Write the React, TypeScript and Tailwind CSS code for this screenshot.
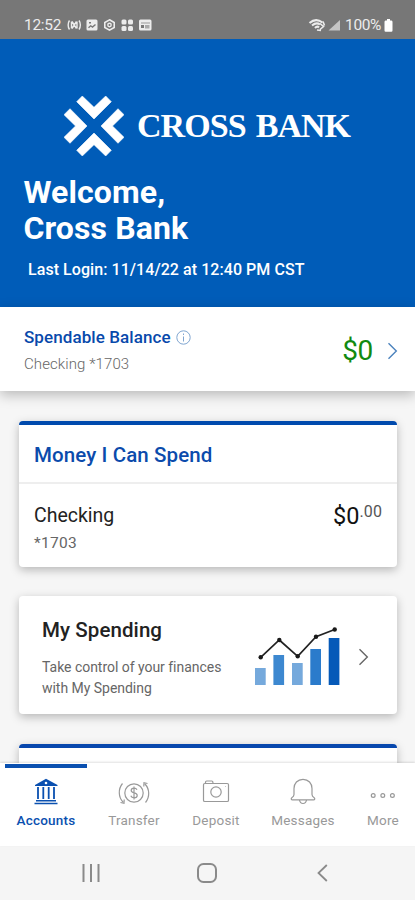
import type { ReactNode } from "react";
import clsx from "clsx";

const bars = [
  { x: 0, height: 17, fill: "#75a9dc" },
  { x: 18.4, height: 30, fill: "#3d88d0" },
  { x: 37, height: 22, fill: "#75a9dc" },
  { x: 55.3, height: 36, fill: "#2b7bcb" },
  { x: 73.7, height: 47, fill: "#0559b8" },
];

const points = [
  [5.7, 30.3],
  [24.3, 13],
  [42.7, 29.3],
  [61, 9.7],
  [79.7, 2.5],
];

function StatusBar() {
  return (
    <div className="flex h-[39px] shrink-0 items-start justify-between bg-[#777777] pl-6 pr-[22px] pt-[15px] text-[#ececec]">
      <div className="flex h-5 items-center">
        <span className="w-[43px] whitespace-nowrap text-[15.5px] leading-5 tracking-[-0.3px]">12:52</span>
        <svg className="-mt-px" width="87" height="14" viewBox="0 0 87 14" fill="none" stroke="currentColor">
          <path d="M2.5 2.5C.7 5 .7 9 2.5 11.5M12 2.5c1.8 2.5 1.8 6.5 0 9M5 3.5l4.5 7M9.5 3.5L5 10.5M4.5 3.5v7M10 3.5v7" strokeWidth="1.4" />
          <rect x="19.5" y="1.5" width="11" height="11" rx="1.5" fill="currentColor" stroke="none" />
          <path d="M21.5 9.8l2.2-2 1.8 1.3 3-2.6M22 4.7h2" stroke="#777" strokeWidth="1.4" />
          <path d="M42.5 1.8l4.7 2.7v5l-4.7 2.7-4.7-2.7v-5z" strokeWidth="1.6" />
          <circle cx="42.5" cy="7" r="1.7" strokeWidth="1.4" />
          <g fill="currentColor" stroke="none">
            <rect x="54.5" y="1.5" width="5" height="5" rx="1.5" />
            <rect x="61" y="1.5" width="5" height="5" rx="1.5" />
            <rect x="54.5" y="8" width="5" height="5" rx="1.5" />
            <rect x="61" y="8" width="5" height="5" rx="1.5" />
            <rect x="72" y="1.5" width="12.5" height="11" rx="1.5" />
          </g>
          <path d="M74 5h9" stroke="#999" />
          <rect x="78" y="7" width="4.5" height="3.5" fill="#aaa" stroke="none" />
          <rect x="74" y="7" width="3" height="3" fill="#777" stroke="none" />
        </svg>
      </div>
      <div className="flex h-5 items-center">
        <svg width="34" height="14" viewBox="0 0 34 14" fill="none" stroke="currentColor">
          <path d="M1.5 5c4-3.500 9-3.500 13-.5M4 7.500c3-2.500 6-2.500 8-1M7 10c1.500-1.500 3-1.500 4-.5" strokeWidth="2.1" />
          <path d="M12 5.500l3.500 3-3.500 3M15 3.500l1.500 4M9 12l4 .5" strokeWidth="1.6" />
          <path d="M32 2v10.500H20.500z" fill="#c4c4c4" stroke="none" />
        </svg>
        <span className="ml-[3px] whitespace-nowrap text-[15.5px] leading-5 tracking-[-0.4px]">100%</span>
        <svg className="ml-[3px]" width="9" height="13" viewBox="0 0 9 13" fill="#fff">
          <path d="M3 0h3v1.500h1.500Q8.500 1.500 8.500 3v8.500q0 1.200-1.200 1.200H1.700Q.5 12.700.5 11.500V3Q.5 1.500 1.500 1.500H3z" />
        </svg>
      </div>
    </div>
  );
}

function Logo() {
  return (
    <div className="flex h-[60px] items-center pl-16 text-white">
      <svg width="60" height="60" viewBox="0 0 60 60" fill="currentColor" stroke="currentColor" strokeWidth="0.6">
        <path d="M12.7 5.700L18.300 0 30 11.300 41.700 0 47.300 5.700 30 23z" />
        <path d="M12.7 54.300L18.300 60 30 48.700 41.700 60 47.300 54.300 30 37z" />
        <path d="M0 18.700L6 12.700 23 30 6 47.300 0 41.300 11.500 30z" />
        <path d="M60 18.700L54 12.700 37 30 54 47.300 60 41.300 48.500 30z" />
      </svg>
      <span className="ml-[13px] whitespace-nowrap font-['Liberation_Serif',serif] text-[34px] font-bold leading-[60px] tracking-[-0.95px] [word-spacing:2.5px]">
        CROSS BANK
      </span>
    </div>
  );
}

function Chevron({ className }: { className?: string }) {
  return (
    <svg className={className} width="11" height="18" viewBox="0 0 11 18" fill="none" stroke="currentColor" strokeWidth="1.4">
      <path d="M1.5 1.2L9.3 9 1.5 16.8" />
    </svg>
  );
}

function SpendingChart() {
  return (
    <svg width="86" height="60" viewBox="0 0 86 60">
      {bars.map((b) => (
        <rect key={b.x} x={b.x} y={58 - b.height} width="10.7" height={b.height} fill={b.fill} />
      ))}
      <polyline points={points.map((p) => p.join(",")).join(" ")} fill="none" stroke="#222" strokeWidth="1.7" />
      {points.map(([x, y]) => (
        <circle key={x} cx={x} cy={y} r="2.2" fill="#1a1a1a" />
      ))}
    </svg>
  );
}

function NavItem({ label, className, active, children }: { label: string; className: string; active?: boolean; children: ReactNode }) {
  return (
    <div className={clsx("flex flex-col items-center border-t-4", className, active ? "border-[#0a50b0] text-[#0a50b0]" : "border-transparent text-[#999999]")}>
      <svg className="mt-[9px] shrink-0" width="32" height="30" viewBox="0 0 32 30" fill="none" stroke="currentColor" strokeWidth="1.2">
        {children}
      </svg>
      <span className={clsx("mt-1 whitespace-nowrap text-[13.5px] leading-[18px] tracking-[0.2px]", active ? "font-medium" : "font-normal")}>{label}</span>
    </div>
  );
}

export default function App() {
  return (
    <div className="flex h-[900px] w-[415px] flex-col overflow-hidden bg-[#f6f6f6] font-[Roboto,sans-serif]">
      <StatusBar />
      <header className="h-[268px] shrink-0 bg-[#005cb8] pt-[57px] text-white">
        <Logo />
        <h1 className="mt-[18px] pl-[23.5px] text-[32px] font-bold leading-9 tracking-[0.1px]">
          Welcome,
          <br />
          Cross Bank
        </h1>
        <p className="mt-3.5 pl-7 text-[16px] font-medium leading-5 tracking-[0.06px]">Last Login: 11/14/22 at 12:40 PM CST</p>
      </header>

      <section className="flex h-[84px] shrink-0 items-center justify-between bg-white pl-6 pr-[17px] pt-px shadow-[0_4px_12px_rgba(0,0,0,0.25)]">
        <div>
          <div className="flex items-center">
            <h2 className="text-[17px] font-medium leading-6 tracking-[0.08px] text-[#0849ab]">Spendable Balance</h2>
            <svg className="ml-[5px]" width="15" height="15" viewBox="0 0 15 15" fill="none" stroke="#7fa5d0">
              <circle cx="7.5" cy="7.5" r="6.7" />
              <path d="M7.5 6.5v5M7.5 3.5v1.5" />
            </svg>
          </div>
          <p className="mt-[5px] text-[15px] font-light leading-5 tracking-[0.08px] text-[#666666]">Checking *1703</p>
        </div>
        <div className="flex items-center pt-[3px]">
          <span className="text-[28px] leading-8 tracking-[-0.3px] text-[#118a11]">$0</span>
          <Chevron className="ml-3.5 text-[#4b82bd]" />
        </div>
      </section>

      <main className="flex min-h-0 flex-1 flex-col overflow-hidden pl-[19px] pr-[18px] pt-[30px]">
        <section className="h-[146px] shrink-0 rounded border-t-[4px] border-[#004aad] bg-white shadow-[0_3px_10px_rgba(0,0,0,0.26)]">
          <h2 className="flex h-[59px] items-center border-b-2 border-[#eeeeee] px-[15px] pt-1 text-[20.5px] font-medium tracking-[0.1px] text-[#0b4bac]">
            Money I Can Spend
          </h2>
          <div className="flex justify-between px-[15px] pt-5">
            <div>
              <p className="text-[19.5px] leading-6 text-[#222222]">Checking</p>
              <p className="mt-[5px] text-[15.5px] leading-5 tracking-[0.3px] text-[#666666]">*1703</p>
            </div>
            <p className="flex items-start text-[23.5px] leading-6 text-[#111111]">
              $0<span className="text-[16px] leading-4 tracking-[0.1px] text-[#555555]">.00</span>
            </p>
          </div>
        </section>

        <section className="mt-[29px] flex h-[118px] shrink-0 items-start rounded bg-white pl-[23px] shadow-[0_3px_10px_rgba(0,0,0,0.26)]">
          <div className="w-[213px] pt-[22px]">
            <h2 className="text-[20.5px] font-medium leading-6 tracking-[0.08px] text-[#222222]">My Spending</h2>
            <p className="mt-[15px] whitespace-nowrap text-[14px] leading-[21px] tracking-[-0.03px] text-[#666666]">
              Take control of your finances
              <br />
              with My Spending
            </p>
          </div>
          <div className="flex items-center pt-[31px]">
            <SpendingChart />
            <Chevron className="ml-[17px] text-[#666666]" />
          </div>
        </section>

        <section className="mt-[30px] h-[146px] shrink-0 rounded border-t-[4px] border-[#0747ad] bg-white shadow-[0_3px_10px_rgba(0,0,0,0.26)]" />
      </main>

      <nav className="z-10 flex h-[83px] shrink-0 bg-white pl-[5px] pt-px shadow-[0_-1px_2px_rgba(0,0,0,0.12)]">
        <NavItem label="Accounts" className="w-[82px]" active>
          <path d="M5 8L16 1.800 27.500 8v1H5z" fill="currentColor" stroke="none" />
          <circle cx="16" cy="6" r="1.3" fill="white" stroke="none" />
          <path d="M8 10v12M13.3 10v12M18.7 10v12M24 10v12" strokeWidth="1.8" />
          <path d="M6 23.7h20M4.5 26.5h23" strokeWidth="1.4" />
        </NavItem>
        <NavItem label="Transfer" className="w-[94px]">
          <circle cx="16" cy="16" r="9.2" />
          <path d="M19 12.800c-.6-1.200-1.600-1.700-3-1.700-1.700 0-2.800.9-2.800 2.300 0 3.300 6 1.700 6 5 0 1.500-1.200 2.400-3.100 2.400-1.600 0-2.800-.7-3.300-2M16 9.500v13" />
          <path d="M4.500 6.500C0 12 .3 20 5 25M2.500 25.500l3.500.8.2-3.800M27.500 25.500c4.500-5.500 4.200-13.500-.5-18.500M29.500 6.500l-3.500-.8-.2 3.800" />
        </NavItem>
        <NavItem label="Deposit" className="w-[70px]">
          <path d="M5.500 6.500V5.200q0-1.200 1.200-1.200h5q1.200 0 1.200 1.200v1.300M4.800 6.500h22.400q1.300 0 1.300 1.300v15.400q0 1.300-1.300 1.300H4.800q-1.300 0-1.300-1.300V7.800q0-1.300 1.300-1.300z" />
          <circle cx="16" cy="15" r="5.2" />
          <path d="M25.5 9.5h.5" />
        </NavItem>
        <NavItem label="Messages" className="w-[104px]">
          <path d="M16 2.300c-5.500 0-9 4.200-9 9.200v6c0 1.500-.8 2.300-2.200 3.200q-.8.600-.5 1.500.2.600 1.200.6h21q1 0 1.200-.6.300-.9-.5-1.500C25.800 19.800 25 19 25 17.500v-6c0-5-3.500-9.200-9-9.200z" />
          <path d="M12.500 23c.4 2.300 1.700 3.500 3.500 3.500s3.100-1.200 3.500-3.500" />
        </NavItem>
        <NavItem label="More" className="w-[56px]">
          <circle cx="6.2" cy="18.5" r="1.9" />
          <circle cx="15.8" cy="18.5" r="1.9" />
          <circle cx="25.4" cy="18.5" r="1.9" />
        </NavItem>
      </nav>

      <div className="flex h-[54px] shrink-0 items-center bg-[#f5f5f5] pl-[82px] text-[#8a8a8a]">
        <svg width="18" height="18" viewBox="0 0 18 18" stroke="currentColor" strokeWidth="2">
          <path d="M1.500 0v18M9 0v18M16.500 0v18" />
        </svg>
        <svg className="ml-[97px]" width="20" height="20" viewBox="0 0 20 20" fill="none" stroke="currentColor" strokeWidth="2">
          <rect x="1" y="1" width="18" height="18" rx="5.5" />
        </svg>
        <svg className="ml-[100px]" width="11" height="18" viewBox="0 0 11 18" fill="none" stroke="currentColor" strokeWidth="1.8">
          <path d="M9.800 1L1.500 9l8.300 8" />
        </svg>
      </div>
    </div>
  );
}
